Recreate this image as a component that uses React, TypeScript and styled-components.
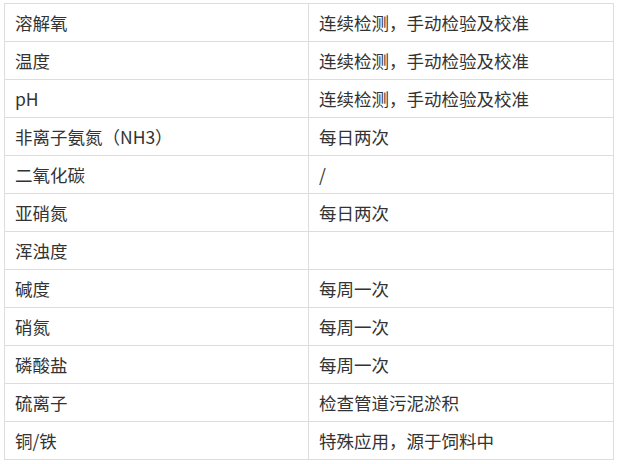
import React from "react";
import styled, { createGlobalStyle } from "styled-components";

const GlobalStyle = createGlobalStyle`
  html, body {
    margin: 0;
    padding: 0;
    background: #ffffff;
  }
  body {
    font-family: "Noto Sans CJK SC", "Noto Sans", sans-serif;
  }
`;

const Page = styled.div`
  padding: 3px 5px 0 4px;
`;

const Table = styled.table`
  width: 609px;
  border-collapse: collapse;
  table-layout: fixed;
`;

const Col = styled.col<{ $w: number }>`
  width: ${p => p.$w}px;
`;

const Row = styled.tr`
  height: 38px;
`;

const Cell = styled.td`
  border: 1px solid #dddddd;
  padding: 1px 10px 0 10px;
  font-size: 17.5px;
  line-height: 22px;
  color: #333333;
  vertical-align: middle;
  white-space: nowrap;
  overflow: hidden;
`;

const rows: [string, string][] = [
  ["溶解氧", "连续检测，手动检验及校准"],
  ["温度", "连续检测，手动检验及校准"],
  ["pH", "连续检测，手动检验及校准"],
  ["非离子氨氮（NH3）", "每日两次"],
  ["二氧化碳", "/"],
  ["亚硝氮", "每日两次"],
  ["浑浊度", ""],
  ["碱度", "每周一次"],
  ["硝氮", "每周一次"],
  ["磷酸盐", "每周一次"],
  ["硫离子", "检查管道污泥淤积"],
  ["铜/铁", "特殊应用，源于饲料中"],
];

export default function App() {
  return (
    <Page>
      <GlobalStyle />
      <Table>
        <colgroup>
          <Col $w={304} />
          <Col $w={305} />
        </colgroup>
        <tbody>
          {rows.map(([name, freq], i) => (
            <Row key={i}>
              <Cell>{name}</Cell>
              <Cell>{freq}</Cell>
            </Row>
          ))}
        </tbody>
      </Table>
    </Page>
  );
}
